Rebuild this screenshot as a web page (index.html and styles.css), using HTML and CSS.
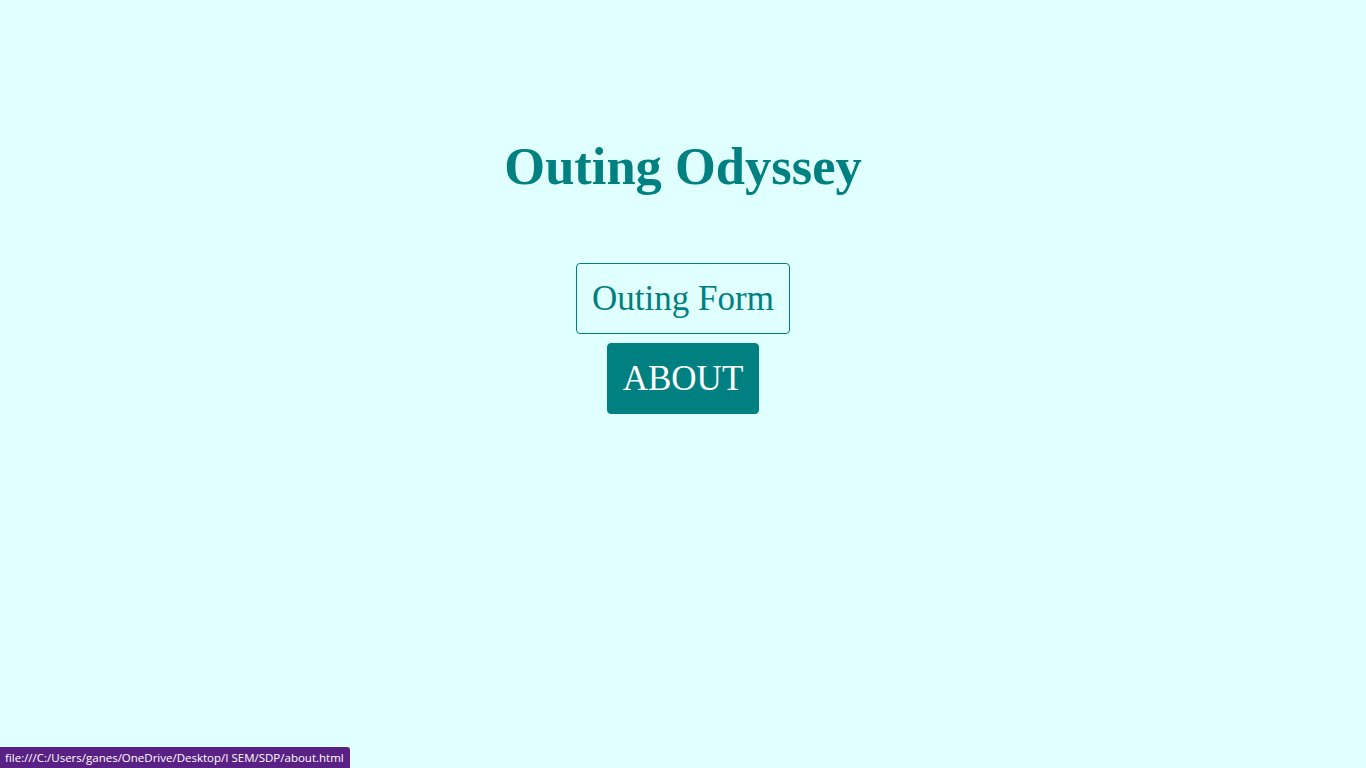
FILE: index.html
```html
<!DOCTYPE html>
<html>
<head>
<meta charset="utf-8">
<title>Outing Odyssey</title>
<link rel="stylesheet" href="styles.css">
</head>
<body>
<main class="page">
  <h1 class="title">Outing Odyssey</h1>
  <nav class="links">
    <a class="btn btn-outline" href="#">Outing Form</a>
    <a class="btn btn-solid" href="#">ABOUT</a>
  </nav>
</main>
<div class="status">file:///C:/Users/ganes/OneDrive/Desktop/I SEM/SDP/about.html</div>
</body>
</html>
```
FILE: styles.css
```css
html, body {
  margin: 0;
  padding: 0;
  height: 100%;
}
body {
  background: #e0ffff;
  font-family: "Liberation Serif", "Times New Roman", serif;
  color: #008080;
}
.page {
  display: flex;
  flex-direction: column;
  align-items: center;
  padding-top: 136px;
}
.title {
  margin: 0;
  font-size: 52.5px;
  font-weight: bold;
  line-height: 60px;
  color: #008080;
}
.links {
  display: flex;
  flex-direction: column;
  align-items: center;
  gap: 9px;
  margin-top: 67px;
}
.btn {
  display: block;
  font-size: 35px;
  line-height: 39px;
  padding: 15px 15px;
  border-radius: 4px;
  text-decoration: none;
  border: 1px solid #008080;
}
.btn-outline {
  color: #008080;
  background: transparent;
}
.btn-solid {
  color: #ffffff;
  background: #008080;
}
.status {
  position: fixed;
  left: 0;
  bottom: 0;
  background: #5a2184;
  color: #ffffff;
  font-family: "Open Sans", "DejaVu Sans", sans-serif;
  font-size: 11.5px;
  line-height: 21px;
  padding: 0 6px 0 5px;
  border-top-right-radius: 3px;
}
```
